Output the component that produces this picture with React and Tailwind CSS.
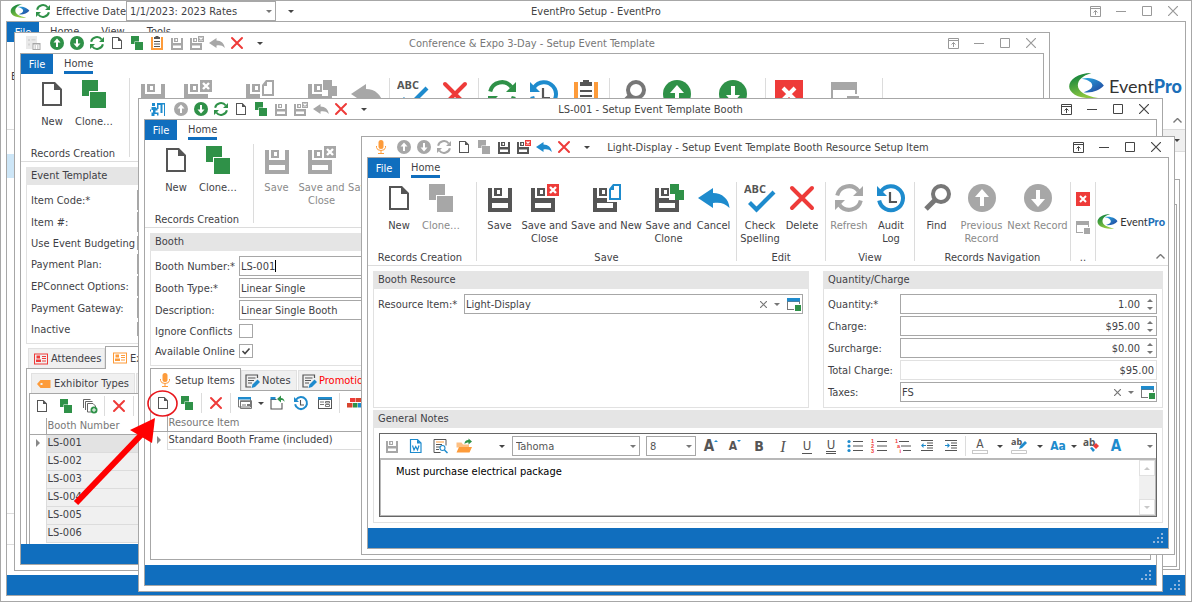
import { useId } from "react";
import clsx from "clsx";

const GREEN = "text-[#2f9148]";
const GRAY = "text-[#a7a7a7]";
const DARK = "text-[#555555]";
const BLUE = "text-[#1e8bcd]";
const RED = "text-[#ee3b39]";

/* ---------- icons, all drawn on a 32 unit grid ---------- */

function Svg({ size = 16, box = 32, className, children }) {
  return (
    <svg
      width={size}
      height={size}
      viewBox={`0 0 ${box} ${box}`}
      fill="currentColor"
      className={clsx("shrink-0", className)}
      aria-hidden="true"
    >
      {children}
    </svg>
  );
}

const NewIcon = (p) => (
  <Svg {...p}>
    <path fillRule="evenodd" d="M6 4h13l7 7v17H6zM8 6v20h16V12h-6V6z" />
  </Svg>
);

const CloneIcon = (p) => (
  <Svg {...p}>
    <path d="M4 2h16v11h-9v5H4zM12 14h16v16H12z" />
  </Svg>
);

const SaveIcon = (p) => (
  <Svg {...p}>
    <path fillRule="evenodd" d="M4 6h4v10h16V6h4v24H4zM8 21v5h16v-5z" />
    <path fillRule="evenodd" d="M10 6h8v8h-8zM13 8v4h3V8z" />
  </Svg>
);

const SaveCloseIcon = ({ accent = RED, ...p }) => (
  <Svg {...p}>
    <path fillRule="evenodd" d="M2 6h4v10h20v14H2zM6 21v5h16v-5z" />
    <path fillRule="evenodd" d="M8 6h8v8H8zM11 8v4h3V8z" />
    <g className={accent}>
      <path d="M18 2h12v12H18z" />
      <path d="M21 5l6 6M27 5l-6 6" stroke="#fff" strokeWidth="2.4" />
    </g>
  </Svg>
);

const SaveNewIcon = ({ accent = BLUE, ...p }) => (
  <Svg {...p}>
    <path fillRule="evenodd" d="M2 6h4v10h10v4h10v10H2zM6 21v5h16v-5z" />
    <path fillRule="evenodd" d="M8 6h8v8H8zM11 8v4h3V8z" />
    <path className={accent} fillRule="evenodd" d="M22 2h8v16H18V7zM23 4v4h-3v8h8V4z" />
  </Svg>
);

const SaveCloneIcon = ({ accent = GREEN, ...p }) => (
  <Svg {...p}>
    <path fillRule="evenodd" d="M2 6h4v10h10v2h10v12H2zM6 21v5h16v-5z" />
    <path fillRule="evenodd" d="M8 6h8v8H8zM11 8v4h3V8z" />
    <path className={accent} d="M17 2h9v6h5v10H22v-6h-5z" />
  </Svg>
);

const UndoIcon = (p) => (
  <Svg {...p}>
    <path d="M0 16L15 6v5c9 0 16 6 16.500 15C27 21 22 20 15 21v5z" />
  </Svg>
);

const CrossIcon = (p) => (
  <Svg {...p}>
    <path d="M6 6l20 20M26 6L6 26" stroke="currentColor" strokeWidth="4" strokeLinecap="round" />
  </Svg>
);

const SpellIcon = ({ size }) => (
  <Svg size={size}>
    <text x="0" y="11" fontSize="11" fontWeight="700" fill="#555" fontFamily="Open Sans, sans-serif">
      ABC
    </text>
    <path d="M5.500 20.500l7 7L30 10" fill="none" stroke="#1e8bcd" strokeWidth="4.200" />
  </Svg>
);

const RefreshIcon = (p) => (
  <Svg {...p}>
    <path
      d="M4.200 13.500A12 12 0 0 1 25.500 9M27.800 18.500A12 12 0 0 1 6.500 23"
      fill="none"
      stroke="currentColor"
      strokeWidth="4"
    />
    <path d="M30 4v10H20zM2 28V18h10z" />
  </Svg>
);

const HistoryIcon = (p) => (
  <Svg {...p}>
    <path d="M6 9.500A12 12 0 1 1 4.200 18.500" fill="none" stroke="currentColor" strokeWidth="4" />
    <path d="M2 4v10h10z" />
    <path d="M15 10v10h7" fill="none" stroke="#555" strokeWidth="2.200" />
  </Svg>
);

const FindIcon = (p) => (
  <Svg {...p}>
    <circle cx="20" cy="12" r="8" fill="none" stroke="currentColor" strokeWidth="4" />
    <path d="M14.500 17.500L5 27" stroke="currentColor" strokeWidth="5" />
  </Svg>
);

const UpIcon = (p) => (
  <Svg {...p}>
    <circle cx="16" cy="16" r="14" />
    <path d="M16 7l7 8h-5v9h-4v-9H9z" fill="#fff" />
  </Svg>
);

const DownIcon = (p) => (
  <Svg {...p}>
    <circle cx="16" cy="16" r="14" />
    <path d="M16 25l7-8h-5V8h-4v9H9z" fill="#fff" />
  </Svg>
);

const ClipboardIcon = (p) => (
  <Svg {...p}>
    <path d="M4 4h24v26H4z" fill="#fd9b3a" />
    <path d="M8 4h16v22H8z" fill="#fff" />
    <path d="M10 4h3V2h6v2h3v4H10zM10 12h12v2H10zM10 17h12v2H10zM10 22h12v2H10z" fill="#555" />
  </Svg>
);

const CloseBoxIcon = (p) => (
  <Svg {...p}>
    <path d="M2 2h28v28H2z" />
    <path d="M10 10l12 12M22 10L10 22" stroke="#fff" strokeWidth="4" />
  </Svg>
);

const WindowIcon = ({ accent, bar, ...p }) => (
  <Svg {...p}>
    <path fillRule="evenodd" d="M2 4h26v12h-2v-4H4v14h12v2H2z" />
    {bar && <path d="M2 4h26v7H2z" className={bar} />}
    {!bar && <path d="M2 4h26v8H2z" />}
    <path d="M18 18h12v12H18z" className={accent} />
  </Svg>
);

const MicIcon = ({ size }) => (
  <Svg size={size} className="text-[#fd9b3a]">
    <rect x="11" y="2" width="10" height="18" rx="5" />
    <path d="M7 14v3q1 6 9 6t9-6v-3" fill="none" stroke="currentColor" strokeWidth="2" />
    <path d="M15 23h2v5h5v2H10v-2h5z" />
  </Svg>
);

const BoothIcon = () => (
  <Svg className={BLUE}>
    <path d="M14 4h16v26h-2V7h-3v17h-4V8h-4v8h-3zM4 4h6v6H4zM3 12h8l4 4v3h-4v4h6v6h-3v-3H9v4H3v-7h3v-5H3zM0 17h2v4H0z" />
  </Svg>
);

const GhostIcon = () => (
  <Svg>
    <path d="M0 2h22v26H0z" fill="#e9e9e9" />
    <path d="M4 8h4v4H4zM11 8h8v3h-8zM4 17h4v4H4z" fill="#d5d5d5" />
    <path d="M13 16h16v14H13z" fill="#a7a7a7" />
    <path d="M15 19h12v9H15z" fill="#fff" />
    <path d="M17 21h3v2h-3zM22 21h3v2h-3zM17 25h3v2h-3zM22 25h3v2h-3z" fill="#a7a7a7" />
  </Svg>
);

const CardIcon = (p) => (
  <Svg {...p}>
    <path fillRule="evenodd" d="M2 5h28v22H2zM4 7v18h24V7z" />
    <path d="M7 9h7v6H7zM6 17h10v5H6zM18 10h8v2h-8zM18 14h8v2h-8zM18 19h8v2h-8z" />
  </Svg>
);

const TagIcon = () => (
  <Svg className="text-[#fd9b3a]">
    <path fillRule="evenodd" d="M9 8h20v16H9l-7-8zM9 14v4h4v-4z" />
  </Svg>
);

const CopiesIcon = () => (
  <Svg className={DARK}>
    <path d="M3 20V3h14M7 24V7h14" fill="none" stroke="currentColor" strokeWidth="1.800" />
    <path d="M18 28h-7V11h11l5 5v4" fill="none" stroke="currentColor" strokeWidth="1.800" />
    <circle cx="24" cy="24" r="7" fill="#2f9148" />
    <path d="M24 20v8M20 24h8" stroke="#fff" strokeWidth="2" />
  </Svg>
);

const NotesIcon = () => (
  <Svg className={DARK}>
    <path d="M27 10V4H4v24h10" fill="none" stroke="currentColor" strokeWidth="2.400" />
    <path d="M8 9h15v2H8zM8 14h12v2H8zM8 19h8v2H8z" />
    <path d="M15 30l2-7 10-10 5 5-10 10z" fill="#1e8bcd" />
  </Svg>
);

const ViewsIcon = () => (
  <Svg>
    <path d="M3 6h24v18H3zM7 12h22v15H7z" fill="#fff" stroke="#777" strokeWidth="2" />
    <path d="M2 4h26v5H2z" fill="#1e8bcd" />
    <path d="M6 11h24v3H6z" fill="#777" />
    <path d="M10 19h8v2h-8zM20 18h6v4h-6z" fill="#777" />
  </Svg>
);

const ExportIcon = () => (
  <Svg>
    <path d="M15 9H4v19h22V16" fill="none" stroke="#555" strokeWidth="2.200" />
    <path d="M3 4h10v5H3z" fill="#1e8bcd" />
    <path d="M31 14c0-5-3-8-7-8V1l-8 7 8 7v-5c4 0 5 1 7 4z" fill="#2f9148" />
  </Svg>
);

const FormIcon = () => (
  <Svg>
    <path fillRule="evenodd" d="M2 4h28v24H2zM4 10v16h24V10z" fill="#555" />
    <path d="M2 4h28v5H2z" fill="#1e8bcd" />
    <path d="M6 13h8v2H6zM6 18h8v2H6z" fill="#777" />
    <path d="M17 13h8v3h-8zM17 19h8v4h-8z" fill="none" stroke="#777" strokeWidth="2" />
  </Svg>
);

const BlocksIcon = () => (
  <Svg>
    <path d="M8 6h11v8H8z" fill="#ee3b39" />
    <path d="M20 6h11v8H20zM2 16h11v9H2z" fill="#d8452f" />
    <path d="M14 16h9v9h-9z" fill="#2f9148" />
    <path d="M24 16h8v9h-8z" fill="#1e8bcd" />
  </Svg>
);

const WordIcon = () => (
  <Svg className={BLUE}>
    <path d="M5 3h14l7 7v19H5z" fill="#fff" stroke="currentColor" strokeWidth="2.400" />
    <path d="M18 3v8h8z" />
    <path d="M9 15l3 9 3.500-7 3.500 7 3-9" fill="none" stroke="currentColor" strokeWidth="2.400" />
  </Svg>
);

const PreviewIcon = () => (
  <Svg className={DARK}>
    <path d="M28 15V3H4v26h13" fill="none" stroke="currentColor" strokeWidth="2" />
    <path d="M8 12h12v2H8zM8 17h8v2H8zM8 22h6v2H8z" />
    <path d="M8 7h16v2H8z" fill="#fd9b3a" />
    <circle cx="21" cy="20" r="5" fill="#fff" stroke="#1e8bcd" strokeWidth="2.200" />
    <path d="M25 24l6 6" stroke="#1e8bcd" strokeWidth="3" />
  </Svg>
);

const FolderIcon = () => (
  <Svg>
    <path d="M1 9h10l3 4h12v6H1z" fill="#fdc083" />
    <path d="M1 29l5-11h26l-5 11z" fill="#fd9b3a" />
    <path d="M17 12c0-5 3-8 8-8V1l7 6-7 6V9c-4 0-5 1-8 3z" fill="#2f9148" />
  </Svg>
);

const ListIcon = ({ marks, stepped }) => (
  <Svg className="overflow-visible">
    <path
      d={stepped ? "M8 6h20v2H8zM12 15h20v2H12zM16 24h16v2H16z" : "M12 6h20v2H12zM12 15h20v2H12zM12 24h20v2H12z"}
      fill="#555"
    />
    {marks ? (
      <g fill="#ee3b39" fontSize="11" fontWeight="700" fontFamily="Liberation Sans">
        <text x="0" y="10">{marks[0]}</text>
        <text x={stepped ? 4 : 0} y="20">{marks[1]}</text>
        <text x={stepped ? 9 : 0} y="30">{marks[2]}</text>
      </g>
    ) : (
      <g fill="#1e8bcd">
        <circle cx="4" cy="7" r="3.200" />
        <circle cx="4" cy="16" r="3.200" />
        <circle cx="4" cy="25" r="3.200" />
      </g>
    )}
  </Svg>
);

const IndentIcon = ({ flip }) => (
  <Svg>
    <path d="M4 4h24v2H4zM16 9h12v2H16zM16 14h12v2H16zM16 19h12v2H16zM4 24h24v2H4z" fill="#555" />
    {flip ? (
      <path d="M14 15l-5-5v4H4v2h5v4z" fill="#1e8bcd" />
    ) : (
      <path d="M4 15l5-5v4h5v2H9v4z" fill="#1e8bcd" />
    )}
  </Svg>
);

const Arrow = ({ up, className = "text-[#777777]" }) => (
  <svg width="6" height="3" viewBox="0 0 6 3" fill="currentColor" className={clsx("shrink-0", className)} aria-hidden="true">
    <path d={up ? "M0 3h6L3 0z" : "M0 0h6L3 3z"} />
  </svg>
);

function Mark({ className }) {
  const id = useId();
  return (
    <svg viewBox="0 0 36 27" className={clsx("shrink-0", className)} aria-hidden="true">
      <defs>
        <linearGradient id={`${id}g`} x1="0" y1="0" x2="0.4" y2="1">
          <stop offset="0" stopColor="#007a3d" />
          <stop offset="1" stopColor="#8cc63f" />
        </linearGradient>
        <linearGradient id={`${id}b`} x1="0" y1="0" x2="1" y2="1">
          <stop offset="0" stopColor="#29abe2" />
          <stop offset="1" stopColor="#21409a" />
        </linearGradient>
      </defs>
      <path d="M23 0C9 0 0 7 0 14s10 14 30 12C17 24 9 19 9 13S14 3 23 0z" fill={`url(#${id}g)`} />
      <path d="M13 6c10-3 20 2 23 7-4 5-12 8-21 7 6-2 9-4 9-7s-4-6-11-7z" fill={`url(#${id}b)`} />
    </svg>
  );
}

function Logo({ large }) {
  return (
    <div
      className={clsx(
        "flex items-center font-[Lato,sans-serif] text-[#333333]",
        large ? "gap-[5px] text-[18px] leading-[26px]" : "gap-[2px] text-[11px] leading-[16px]"
      )}
    >
      <Mark className={large ? "h-[26px] w-[35px]" : "h-[15px] w-[21px]"} />
      <span>
        Event<b className="font-black text-[#1b6fb8]">Pro</b>
      </span>
    </div>
  );
}

/* ---------- window chrome ---------- */

function WindowButtons({ dim }) {
  const slot = "flex h-5 w-[26px] items-center justify-center";
  return (
    <div className={clsx("flex justify-end pr-[5px]", dim ? "text-[#999999]" : "text-[#444444]")}>
      <button className={slot} aria-label="Ribbon options">
        <svg width="11" height="11" viewBox="0 0 11 11" fill="none" stroke="currentColor" aria-hidden="true">
          <path d="M.5.500h10v10H.500zM.500 2.500h10M5.500 9V4.500M3.500 6.500l2-2 2 2" />
        </svg>
      </button>
      <button className={slot} aria-label="Minimize">
        <svg width="10" height="10" viewBox="0 0 10 10" stroke="currentColor" aria-hidden="true">
          <path d="M0 5.500h10" />
        </svg>
      </button>
      <button className={slot} aria-label="Maximize">
        <svg width="10" height="10" viewBox="0 0 10 10" fill="none" stroke="currentColor" aria-hidden="true">
          <path d="M.5.500h9v9h-9z" />
        </svg>
      </button>
      <button className={slot} aria-label="Close">
        <svg width="10" height="10" viewBox="0 0 10 10" fill="none" stroke="currentColor" strokeWidth="1.200" aria-hidden="true">
          <path d="M0 0l10 10M10 0L0 10" />
        </svg>
      </button>
    </div>
  );
}

function QuickBar({ icon, items }) {
  return (
    <div className="flex min-w-0 items-center pl-[9px]">
      <span className="mr-[3px] flex w-5 justify-center">{icon}</span>
      {items.map(([label, Icon, color, accent]) => (
        <button key={label} aria-label={label} className="flex w-5 shrink-0 justify-center">
          <Icon className={color} accent={accent} />
        </button>
      ))}
      <button aria-label="Customize" className="ml-[3px] flex w-5 justify-center">
        <Arrow className="text-[#444444]" />
      </button>
    </div>
  );
}

function Window({ title, quick, dim, dimTitle, className, tabs = ["Home"], children }) {
  return (
    <section className={clsx("flex flex-col border border-[#a7a7a7] bg-white px-[5px] pb-[5px]", className)}>
      <header className="-mx-[5px] grid h-5 shrink-0 grid-cols-[1fr_auto_1fr] items-center">
        {quick}
        <h1 className={dimTitle ? "text-[#777777]" : "text-[#444444]"}>{title}</h1>
        <WindowButtons dim={dim} />
      </header>
      <div className="flex min-h-0 flex-1 flex-col overflow-hidden border border-[#a7a7a7]">
        <nav className="flex h-5 shrink-0 gap-[22px]">
          <button className="-mr-[11px] w-8 bg-[#106ebe] text-white">File</button>
          {tabs.map((t, i) => (
            <button key={t} className={clsx("border-b-[3px] pt-[2px]", i === 0 ? "border-[#106ebe]" : "border-transparent")}>
              {t}
            </button>
          ))}
        </nav>
        {children}
        <footer className="flex h-5 shrink-0 items-end justify-end bg-[#106ebe] p-[5px]">
          <svg width="10" height="10" viewBox="0 0 10 10" fill="#8fb4dc" aria-hidden="true">
            <path d="M8 0h2v2H8zM4 4h2v2H4zM8 4h2v2H8zM0 8h2v2H0zM4 8h2v2H4zM8 8h2v2H8z" />
          </svg>
        </footer>
      </div>
    </section>
  );
}

/* ---------- ribbon ---------- */

function RibbonButton({ label, icon: Icon, color = DARK, accent, off, hideLabel, w = "w-[42px]" }) {
  return (
    <button
      aria-label={hideLabel ? label : undefined}
      className={clsx("flex shrink-0 flex-col items-center", w, off && "text-[#8a8a8a]")}
    >
      <Icon size={32} className={color} accent={accent} />
      {!hideLabel && <span className="mt-[5px] whitespace-pre">{label}</span>}
    </button>
  );
}

function RibbonGroup({ caption, w, children }) {
  return (
    <div className={clsx("my-1 flex shrink-0 flex-col justify-between border-r border-[#dcdcdc]", w)}>
      <div className="flex justify-center">{children}</div>
      <div className="h-2 text-center leading-[10px]">{caption}</div>
    </div>
  );
}

function RecordsCreation({ off }) {
  return (
    <RibbonGroup caption="Records Creation" w="w-[109px] pr-[4px]">
      <RibbonButton label="New" icon={NewIcon} />
      <RibbonButton label="Clone…" icon={CloneIcon} color={off ? GRAY : GREEN} off={off} />
    </RibbonGroup>
  );
}

function RibbonEnd({ large }) {
  return (
    <div className="grid flex-1 grid-rows-[1fr_auto_1fr] justify-items-end overflow-hidden">
      <div className="row-start-2 pr-[3px]">
        <Logo large={large} />
      </div>
      <button aria-label="Collapse ribbon" className="row-start-3 mb-[6px] self-end pr-[3px] text-[#777777]">
        <svg width="9" height="5" viewBox="0 0 9 5" fill="none" stroke="currentColor" strokeWidth="1.400" aria-hidden="true">
          <path d="M.5 4.500l4-4 4 4" />
        </svg>
      </button>
    </div>
  );
}

function Ribbon({ children }) {
  return <div className="flex h-[88px] shrink-0 border-b border-[#dcdcdc]">{children}</div>;
}

/* ---------- form pieces ---------- */

function Panel({ title, className, children }) {
  return (
    <section className={clsx("flex flex-col border border-[#e1e1e1]", className)}>
      <h2 className="-mx-px -mt-px h-[18px] shrink-0 bg-[#e5e5e5] pl-[5px] leading-[18px]">{title}</h2>
      <div className="flex flex-1 flex-col gap-[2px] pt-[5px] pr-[5px] pb-[5px] pl-1">{children}</div>
    </section>
  );
}

function Row({ id, label, labelW, children, low }) {
  return (
    <div className={clsx("flex items-center", low ? "h-[18px]" : "h-5")}>
      <label htmlFor={id} className={clsx("shrink-0 whitespace-nowrap", labelW)}>
        {label}
      </label>
      {children}
    </div>
  );
}

const field = "flex h-5 min-w-0 flex-1 items-center border border-[#a7a7a7] bg-white";
const bare = "h-full min-w-0 bg-transparent outline-none";

function TextField({ id, value, caret }) {
  return (
    <div className={field}>
      <input id={id} defaultValue={value} className={clsx(bare, "pl-px", caret ? "field-sizing-content" : "flex-1")} />
      {caret && <span className="h-3 w-px bg-black" />}
    </div>
  );
}

function SpinField({ id, value }) {
  return (
    <div className={field}>
      <input id={id} defaultValue={value} className={clsx(bare, "flex-1 text-right")} />
      <span className="ml-[7px] flex w-[9px] flex-col gap-[5px]">
        <button aria-label={`Increase ${id}`}><Arrow up /></button>
        <button aria-label={`Decrease ${id}`}><Arrow /></button>
      </span>
    </div>
  );
}

function LookupField({ id, value }) {
  return (
    <div className={field}>
      <input id={id} defaultValue={value} className={clsx(bare, "flex-1 pl-px")} />
      <button aria-label="Clear" className="flex w-3 justify-center text-[#777777]">
        <svg width="7" height="7" viewBox="0 0 7 7" stroke="currentColor" strokeWidth="1.200" aria-hidden="true">
          <path d="M0 0l7 7M7 0L0 7" />
        </svg>
      </button>
      <button aria-label="Drop down" className="flex w-4 justify-center"><Arrow /></button>
      <button aria-label="Open record" className="flex w-[17px] justify-center">
        <WindowIcon className="text-[#777777]" bar={BLUE} accent={GREEN} />
      </button>
    </div>
  );
}

function CheckField({ id, checked }) {
  return (
    <span className="grid">
      <input
        id={id}
        type="checkbox"
        defaultChecked={checked}
        className="peer col-start-1 row-start-1 size-[14px] appearance-none border border-[#a7a7a7] bg-white"
      />
      <svg
        viewBox="0 0 14 14"
        className="pointer-events-none invisible col-start-1 row-start-1 size-[14px] peer-checked:visible"
        fill="none"
        stroke="#444"
        strokeWidth="1.600"
        aria-hidden="true"
      >
        <path d="M3.500 7l2.500 2.500L10.500 4.500" />
      </svg>
    </span>
  );
}

function Select({ label, value, className }) {
  return (
    <div className={clsx("flex h-5 shrink-0 items-center border border-[#a7a7a7] bg-white pr-[3px]", className)}>
      <select aria-label={label} defaultValue={value} className="h-full min-w-0 flex-1 appearance-none bg-transparent pl-[3px] outline-none">
        <option>{value}</option>
      </select>
      <Arrow />
    </div>
  );
}

function Tab({ icon, active, className, children }) {
  return (
    <button
      className={clsx(
        "flex shrink-0 items-center gap-[2px] whitespace-nowrap",
        active ? "h-[23px] border-x border-t border-[#a7a7a7] bg-white" : "h-5 border-x border-t border-[#e1e1e1] bg-[#f0f0f0]",
        className
      )}
    >
      {icon}
      {children}
    </button>
  );
}

const Sep = () => <span className="mx-[2px] h-5 w-px shrink-0 bg-[#dcdcdc]" />;

const Tool = ({ label, w = "w-6", children }) => (
  <button aria-label={label} className={clsx("flex h-6 shrink-0 items-center justify-center", w)}>
    {children}
  </button>
);

const RowArrow = () => (
  <svg width="4" height="8" viewBox="0 0 4 8" fill="#888" className="mx-auto" aria-hidden="true">
    <path d="M0 0l4 4-4 4z" />
  </svg>
);

function RecordTable({ heading, rows, shaded }) {
  return (
    <table className="w-full table-fixed border-collapse">
      <thead>
        <tr className="h-4 border-b border-[#a7a7a7] text-left text-[#777777]">
          <th className="w-4 border-r border-[#a7a7a7] p-0" aria-label="Row" />
          <th className="p-0 pl-px leading-[15px] font-normal">{heading}</th>
        </tr>
      </thead>
      <tbody>
        {rows.map((r, i) => (
          <tr key={r} className="h-[18px]">
            <td className="border-r border-[#dcdcdc] p-0">{i === 0 && <RowArrow />}</td>
            <td
              className={clsx(
                "border-b border-[#dcdcdc] p-0 pb-[2px] pl-px leading-[15px]",
                shaded && (i === 0 ? "bg-[#e3e3e3]" : "bg-[#f0f0f0]")
              )}
            >
              {r}
            </td>
          </tr>
        ))}
      </tbody>
    </table>
  );
}

/* ---------- windows ---------- */

function MainWindow() {
  return (
    <Window
      title="EventPro Setup - EventPro"
      dim
      className="h-full"
      tabs={["Home", "View", "Tools"]}
      quick={
        <div className="flex items-center pl-[9px]">
          <Mark className="h-[14px] w-5" />
          <button aria-label="Refresh" className="mx-[3px] flex w-5 justify-center">
            <RefreshIcon className={GREEN} />
          </button>
          <span className="w-[70px] whitespace-nowrap">Effective Date</span>
          <Select label="Effective Date" value="1/1/2023: 2023 Rates" className="w-[150px]" />
          <button aria-label="Customize" className="flex w-[30px] justify-center">
            <Arrow className="text-[#444444]" />
          </button>
        </div>
      }
    >
      <Ribbon>
        <span className="pt-[28px] pl-1">E</span>
        <RibbonEnd large />
      </Ribbon>
      <div className="flex min-h-0 flex-1">
        <aside className="flex w-32 flex-col justify-between pt-6 pb-[30px]">
          <div className="h-6 bg-[#cde6f7]" />
          <div className="h-8 border-y border-[#dcdcdc]" />
        </aside>
        <div className="flex min-w-0 flex-1 flex-col pb-[5px]">
          <div className="flex h-[22px] items-center justify-end border-b border-[#dcdcdc] bg-[#f0f0f0] pr-[5px]">
            <Arrow className="text-[#444444]" />
          </div>
          <div className="mt-[27px] mr-[5px] flex flex-1 border border-[#a7a7a7] pt-6 pr-[2px] pb-[2px]">
            <div className="flex-1 border border-[#a7a7a7]" />
          </div>
        </div>
      </div>
    </Window>
  );
}

function TemplateWindow() {
  const lw = "w-[106px]";
  return (
    <Window
      title="Conference & Expo 3-Day - Setup Event Template"
      dim
      dimTitle
      className="absolute top-8 right-[142px] bottom-[31px] left-[14px]"
      quick={
        <QuickBar
          icon={<GhostIcon />}
          items={[
            ["Previous", UpIcon, GREEN],
            ["Next", DownIcon, GREEN],
            ["Refresh", RefreshIcon, GREEN],
            ["New", NewIcon, DARK],
            ["Clone", CloneIcon, GREEN],
            ["Clipboard", ClipboardIcon],
            ["Save", SaveIcon, GRAY],
            ["Save and Close", SaveCloseIcon, GRAY, GRAY],
            ["Cancel", UndoIcon, GRAY],
            ["Delete", CrossIcon, RED],
          ]}
        />
      }
    >
      <Ribbon>
        <RecordsCreation />
        <RibbonGroup w="w-[260px]">
          <RibbonButton hideLabel label="Save" icon={SaveIcon} color={GRAY} />
          <RibbonButton hideLabel label="Save and Close" icon={SaveCloseIcon} color={GRAY} accent={GRAY} w="w-[48px]" />
          <RibbonButton hideLabel label="Save and New" icon={SaveNewIcon} color={GRAY} accent={GRAY} w="w-[76px]" />
          <RibbonButton hideLabel label="Save and Clone" icon={SaveCloneIcon} color={GRAY} accent={GRAY} w="w-[48px]" />
          <RibbonButton hideLabel label="Cancel" icon={UndoIcon} color={GRAY} />
        </RibbonGroup>
        <RibbonGroup w="w-[89px]">
          <RibbonButton hideLabel label="Check Spelling" icon={SpellIcon} />
          <RibbonButton hideLabel label="Delete" icon={CrossIcon} color={RED} />
        </RibbonGroup>
        <RibbonGroup w="w-[131px]">
          <RibbonButton hideLabel label="Refresh" icon={RefreshIcon} color={GREEN} />
          <RibbonButton hideLabel label="Audit Log" icon={HistoryIcon} color={BLUE} />
          <RibbonButton hideLabel label="Clipboard" icon={ClipboardIcon} />
        </RibbonGroup>
        <RibbonGroup w="w-[156px]">
          <RibbonButton hideLabel label="Find" icon={FindIcon} color="text-[#777777]" />
          <RibbonButton hideLabel label="Previous Record" icon={UpIcon} color={GREEN} w="w-[48px]" />
          <RibbonButton hideLabel label="Next Record" icon={DownIcon} color={GREEN} w="w-[64px]" />
        </RibbonGroup>
        <RibbonGroup w="w-[117px] pr-[6px]">
          <RibbonButton hideLabel label="Close" icon={CloseBoxIcon} color={RED} w="w-[48px]" />
          <RibbonButton hideLabel label="Windows" icon={WindowIcon} color={GRAY} w="w-[64px]" />
        </RibbonGroup>
      </Ribbon>
      <div className="flex min-h-0 flex-1 flex-col gap-[2px] px-[5px] pt-[5px]">
        <Panel title="Event Template">
          <Row id="itemCode" label="Item Code:*" labelW={lw}><TextField id="itemCode" /></Row>
          <Row id="itemNo" label="Item #:" labelW={lw}><TextField id="itemNo" /></Row>
          <Row id="budgeting" label="Use Event Budgeting" labelW={lw} low><CheckField id="budgeting" /></Row>
          <Row id="plan" label="Payment Plan:" labelW={lw}><TextField id="plan" /></Row>
          <Row id="connect" label="EPConnect Options:" labelW={lw}><TextField id="connect" /></Row>
          <Row id="gateway" label="Payment Gateway:" labelW={lw}><TextField id="gateway" /></Row>
          <Row id="inactive" label="Inactive" labelW={lw} low><CheckField id="inactive" /></Row>
        </Panel>
        <div className="flex min-h-0 flex-1 flex-col">
          <div className="flex h-[23px] shrink-0 items-end">
            <div className="flex border-b border-[#a7a7a7] pl-[2px]">
              <Tab className="w-[77px] pl-1" icon={<CardIcon className={RED} />}>Attendees</Tab>
            </div>
            <Tab active className="w-24 pl-[6px]" icon={<CardIcon className="text-[#fd9b3a]" />}>Exhibitors</Tab>
            <div className="flex-1 self-stretch border-b border-[#a7a7a7]" />
          </div>
          <div className="flex min-h-0 flex-1 flex-col border-x border-[#a7a7a7] px-[2px] pt-[2px]">
            <div className="flex h-[23px] shrink-0 items-end gap-px border-b border-[#a7a7a7] pl-[2px]">
              <Tab className="w-[104px] pl-1" icon={<TagIcon />}>Exhibitor Types</Tab>
              <Tab className="w-20" />
            </div>
            <div className="min-h-0 flex-1 overflow-hidden border-x border-[#a7a7a7]">
              <div className="flex h-6 items-center">
                <Tool label="New"><NewIcon className={DARK} /></Tool>
                <Tool label="Clone"><CloneIcon className={GREEN} /></Tool>
                <Tool label="Add copies"><CopiesIcon /></Tool>
                <Sep />
                <Tool label="Delete"><CrossIcon className={RED} /></Tool>
                <Sep />
              </div>
              <RecordTable
                shaded
                heading="Booth Number"
                rows={["LS-001", "LS-002", "LS-003", "LS-004", "LS-005", "LS-006"]}
              />
            </div>
          </div>
        </div>
      </div>
    </Window>
  );
}

function BoothWindow() {
  const lw = "w-[84px]";
  return (
    <Window
      title="LS-001 - Setup Event Template Booth"
      className="absolute top-[98px] right-[29px] bottom-[10px] left-[138px]"
      quick={
        <QuickBar
          icon={<BoothIcon />}
          items={[
            ["Previous", UpIcon, GRAY],
            ["Next", DownIcon, GREEN],
            ["Refresh", RefreshIcon, GREEN],
            ["New", NewIcon, DARK],
            ["Clone", CloneIcon, GREEN],
            ["Save", SaveIcon, GRAY],
            ["Save and Close", SaveCloseIcon, GRAY, GRAY],
            ["Cancel", UndoIcon, GRAY],
            ["Delete", CrossIcon, RED],
          ]}
        />
      }
    >
      <Ribbon>
        <RecordsCreation />
        <RibbonGroup w="w-[260px]">
          <RibbonButton off label="Save" icon={SaveIcon} color={GRAY} />
          <RibbonButton off label={"Save and\nClose"} icon={SaveCloseIcon} color={GRAY} accent={GRAY} w="w-[48px]" />
          <RibbonButton off label="Save and New" icon={SaveNewIcon} color={GRAY} accent={GRAY} w="w-[76px]" />
          <RibbonButton off hideLabel label="Save and Clone" icon={SaveCloneIcon} color={GRAY} accent={GRAY} w="w-[48px]" />
          <RibbonButton off hideLabel label="Cancel" icon={UndoIcon} color={GRAY} />
        </RibbonGroup>
      </Ribbon>
      <div className="flex min-h-0 flex-1 flex-col gap-[2px] p-[5px]">
        <Panel title="Booth">
          <Row id="boothNo" label="Booth Number:*" labelW={lw}>
            <TextField id="boothNo" value="LS-001" caret />
          </Row>
          <Row id="boothType" label="Booth Type:*" labelW={lw}>
            <TextField id="boothType" value="Linear Single" />
          </Row>
          <Row id="boothDesc" label="Description:" labelW={lw}>
            <TextField id="boothDesc" value="Linear Single Booth" />
          </Row>
          <Row id="conflicts" label="Ignore Conflicts" labelW={lw} low><CheckField id="conflicts" /></Row>
          <Row id="online" label="Available Online" labelW={lw} low><CheckField id="online" checked /></Row>
        </Panel>
        <div className="flex min-h-0 flex-1 flex-col">
          <div className="flex h-[23px] shrink-0">
            <Tab active className="w-[91px] pl-[6px]" icon={<MicIcon />}>Setup Items</Tab>
            <div className="flex flex-1 items-end gap-px border-b border-[#a7a7a7]">
              <Tab className="w-14 pl-[2px]" icon={<NotesIcon />}>Notes</Tab>
              <Tab className="w-24 pl-[2px] text-[#ff0000]" icon={<NotesIcon />}>Promotional</Tab>
            </div>
          </div>
          <div className="flex-1 border-x border-b border-[#a7a7a7]">
            <div className="flex h-6 items-center">
              <Tool label="New"><NewIcon className={DARK} /></Tool>
              <Tool label="Clone"><CloneIcon className={GREEN} /></Tool>
              <Sep />
              <Tool label="Delete"><CrossIcon className={RED} /></Tool>
              <Sep />
              <Tool label="Views"><ViewsIcon /></Tool>
              <Tool label="More views" w="w-2"><Arrow className="text-[#444444]" /></Tool>
              <Tool label="Export"><ExportIcon /></Tool>
              <Tool label="History"><HistoryIcon className={BLUE} /></Tool>
              <Tool label="Form"><FormIcon /></Tool>
              <Sep />
              <Tool label="Layout"><BlocksIcon /></Tool>
            </div>
            <RecordTable heading="Resource Item" rows={["Standard Booth Frame (included)"]} />
          </div>
        </div>
      </div>
    </Window>
  );
}

function NotesEditor() {
  return (
    <div className="ml-px flex flex-1 flex-col border border-[#666666]">
      <div className="flex h-6 shrink-0 items-center text-[#555555]">
        <Tool label="Save"><SaveIcon className={GRAY} /></Tool>
        <Tool label="Export to Word"><WordIcon /></Tool>
        <Tool label="Preview"><PreviewIcon /></Tool>
        <Tool label="Open"><FolderIcon /></Tool>
        <span className="w-5 shrink-0" />
        <Tool label="More" w="w-3"><Arrow className="text-[#444444]" /></Tool>
        <Select label="Font" value="Tahoma" className="mx-1 w-[128px]" />
        <Select label="Size" value="8" className="mr-[3px] ml-[2px] w-[50px]" />
        <Tool label="Grow font">
          <span className="text-[15px] font-semibold">A</span>
          <svg width="4" height="2" viewBox="0 0 4 2" fill="#1e8bcd" className="mt-[6px] self-start" aria-hidden="true">
            <path d="M0 2h4L2 0z" />
          </svg>
        </Tool>
        <Tool label="Shrink font">
          <span className="text-[12px] font-semibold">A</span>
          <svg width="4" height="2" viewBox="0 0 4 2" fill="#1e8bcd" className="mt-[6px] self-start" aria-hidden="true">
            <path d="M0 0h4L2 2z" />
          </svg>
        </Tool>
        <Tool label="Bold"><b className="text-[14px]">B</b></Tool>
        <Tool label="Italic"><i className="font-[Liberation_Serif,serif] text-[16px]">I</i></Tool>
        <Tool label="Underline"><span className="border-b border-[#555555] px-px text-[13px] leading-[14px]">U</span></Tool>
        <Tool label="Double underline">
          <span className="border-b-[3px] border-double border-[#555555] px-px text-[13px] leading-[13px]">U</span>
        </Tool>
        <Tool label="Bullets"><ListIcon /></Tool>
        <Tool label="Numbering"><ListIcon marks={["1", "2", "3"]} /></Tool>
        <Tool label="Multilevel list"><ListIcon stepped marks={["1", "a", "i"]} /></Tool>
        <Tool label="Decrease indent"><IndentIcon /></Tool>
        <Tool label="Increase indent"><IndentIcon flip /></Tool>
        <Sep />
        <Tool label="Font color">
          <span className="flex flex-col items-center text-[12px] leading-[12px]">
            A<span className="h-1 w-4 border border-[#c8c8c8]" />
          </span>
        </Tool>
        <Tool label="Font colors" w="w-4"><Arrow className="text-[#444444]" /></Tool>
        <Tool label="Highlight">
          <svg width="18" height="18" viewBox="0 0 18 18" className="overflow-visible" aria-hidden="true">
            <text x="0" y="8" fontSize="9" fontWeight="700" fill="#555" fontFamily="Open Sans, sans-serif">ab</text>
            <path d="M8 12l1-3 5-5 2 2-5 5z" fill="#1e8bcd" />
            <path d="M.5 13.500h15v3H.500z" fill="#fff" stroke="#c8c8c8" />
          </svg>
        </Tool>
        <Tool label="Highlight colors" w="w-4"><Arrow className="text-[#444444]" /></Tool>
        <Tool label="Change case" w="w-5"><b className={clsx("text-[12px]", BLUE)}>Aa</b></Tool>
        <Tool label="Case options" w="w-3"><Arrow className="text-[#444444]" /></Tool>
        <Tool label="Clear formatting">
          <svg width="18" height="18" viewBox="0 0 18 18" className="overflow-visible" aria-hidden="true">
            <text x="0" y="9" fontSize="10" fontWeight="700" fill="#555" fontFamily="Open Sans, sans-serif">ab</text>
            <path d="M10 9l3-3 3 3-3 3z" fill="#ee3b39" />
            <path d="M7 11l2-1 3 3-2 2z" fill="#1e8bcd" />
          </svg>
        </Tool>
        <Tool label="Text style"><b className={clsx("text-[15px]", BLUE)}>A</b></Tool>
        <span className="ml-auto flex w-3 justify-center"><Arrow /></span>
      </div>
      <div className="flex flex-1 border border-t-2 border-[#b8b8b8]">
        <textarea
          aria-label="General Notes"
          defaultValue="Must purchase electrical package"
          className="flex-1 resize-none pt-[5px] pl-[15px] text-black outline-none"
        />
        <div className="flex w-4 flex-col justify-between bg-[#f0f0f0] text-[#c8c8c8]">
          <button aria-label="Scroll up" className="flex h-4 items-center justify-center border border-[#e1e1e1] bg-white">
            <Arrow up className="text-[#c8c8c8]" />
          </button>
          <button aria-label="Scroll down" className="flex h-4 items-center justify-center border border-[#e1e1e1] bg-white">
            <Arrow className="text-[#c8c8c8]" />
          </button>
        </div>
      </div>
    </div>
  );
}

function ResourceWindow() {
  const lw = "w-[72px]";
  return (
    <Window
      title="Light-Display - Setup Event Template Booth Resource Setup Item"
      className="absolute top-[136px] right-[17px] bottom-[47px] left-[361px]"
      quick={
        <QuickBar
          icon={<MicIcon />}
          items={[
            ["Previous", UpIcon, GRAY],
            ["Next", DownIcon, GRAY],
            ["Refresh", RefreshIcon, GRAY],
            ["New", NewIcon, DARK],
            ["Clone", CloneIcon, GRAY],
            ["Save", SaveIcon, DARK],
            ["Save and Close", SaveCloseIcon, DARK],
            ["Cancel", UndoIcon, BLUE],
            ["Delete", CrossIcon, RED],
          ]}
        />
      }
    >
      <Ribbon>
        <RecordsCreation off />
        <RibbonGroup caption="Save" w="w-[260px]">
          <RibbonButton label="Save" icon={SaveIcon} />
          <RibbonButton label={"Save and\nClose"} icon={SaveCloseIcon} w="w-[48px]" />
          <RibbonButton label="Save and New" icon={SaveNewIcon} w="w-[76px]" />
          <RibbonButton label={"Save and\nClone"} icon={SaveCloneIcon} w="w-[48px]" />
          <RibbonButton label="Cancel" icon={UndoIcon} color={BLUE} />
        </RibbonGroup>
        <RibbonGroup caption="Edit" w="w-[89px]">
          <RibbonButton label={"Check\nSpelling"} icon={SpellIcon} />
          <RibbonButton label="Delete" icon={CrossIcon} color={RED} />
        </RibbonGroup>
        <RibbonGroup caption="View" w="w-[89px]">
          <RibbonButton off label="Refresh" icon={RefreshIcon} color={GRAY} />
          <RibbonButton label={"Audit\nLog"} icon={HistoryIcon} color={BLUE} />
        </RibbonGroup>
        <RibbonGroup caption="Records Navigation" w="w-[156px]">
          <RibbonButton label="Find" icon={FindIcon} color="text-[#777777]" />
          <RibbonButton off label={"Previous\nRecord"} icon={UpIcon} color={GRAY} w="w-[48px]" />
          <RibbonButton off label="Next Record" icon={DownIcon} color={GRAY} w="w-[64px]" />
        </RibbonGroup>
        <RibbonGroup caption=".." w="w-[25px]">
          <div className="flex flex-col gap-3 pt-[9px]">
            <button aria-label="Close"><CloseBoxIcon className={RED} /></button>
            <button aria-label="Windows"><WindowIcon className={GRAY} /></button>
          </div>
        </RibbonGroup>
        <RibbonEnd />
      </Ribbon>
      <div className="flex min-h-0 flex-1 flex-col gap-[2px] p-[5px]">
        <div className="flex gap-[14px]">
          <Panel title="Booth Resource" className="flex-1">
            <Row id="resource" label="Resource Item:*" labelW="w-[86px]">
              <LookupField id="resource" value="Light-Display" />
            </Row>
          </Panel>
          <Panel title="Quantity/Charge" className="w-[340px]">
            <Row id="quantity" label="Quantity:*" labelW={lw}><SpinField id="quantity" value="1.00" /></Row>
            <Row id="charge" label="Charge:" labelW={lw}><SpinField id="charge" value="$95.00" /></Row>
            <Row id="surcharge" label="Surcharge:" labelW={lw}><SpinField id="surcharge" value="$0.00" /></Row>
            <Row id="total" label="Total Charge:" labelW={lw}>
              <input
                id="total"
                readOnly
                value="$95.00"
                className="h-5 min-w-0 flex-1 border border-[#e1e1e1] pr-[2px] text-right outline-none"
              />
            </Row>
            <Row id="taxes" label="Taxes:" labelW={lw}><LookupField id="taxes" value="FS" /></Row>
          </Panel>
        </div>
        <Panel title="General Notes" className="flex-1">
          <NotesEditor />
        </Panel>
      </div>
    </Window>
  );
}

export default function App() {
  return (
    <main className="relative h-screen min-h-[600px] overflow-hidden bg-white font-['DejaVu_Sans_Condensed',Roboto,sans-serif] text-[11px] leading-[13px] text-[#3f3f46]">
      <MainWindow />
      <TemplateWindow />
      <BoothWindow />
      <ResourceWindow />
      {/* callout: circle on the New tool with an arrow to it */}
      <svg
        width="110"
        height="120"
        viewBox="0 0 110 120"
        className="pointer-events-none absolute top-[388px] left-[72px]"
        aria-hidden="true"
      >
        <ellipse cx="90.500" cy="15.500" rx="14.500" ry="12.500" fill="none" stroke="#e8151b" strokeWidth="1.600" />
        <path d="M4 115L69 47" stroke="#ff0000" strokeWidth="6" />
        <path d="M83 30L58 42l22 13z" fill="#ff0000" />
      </svg>
    </main>
  );
}
